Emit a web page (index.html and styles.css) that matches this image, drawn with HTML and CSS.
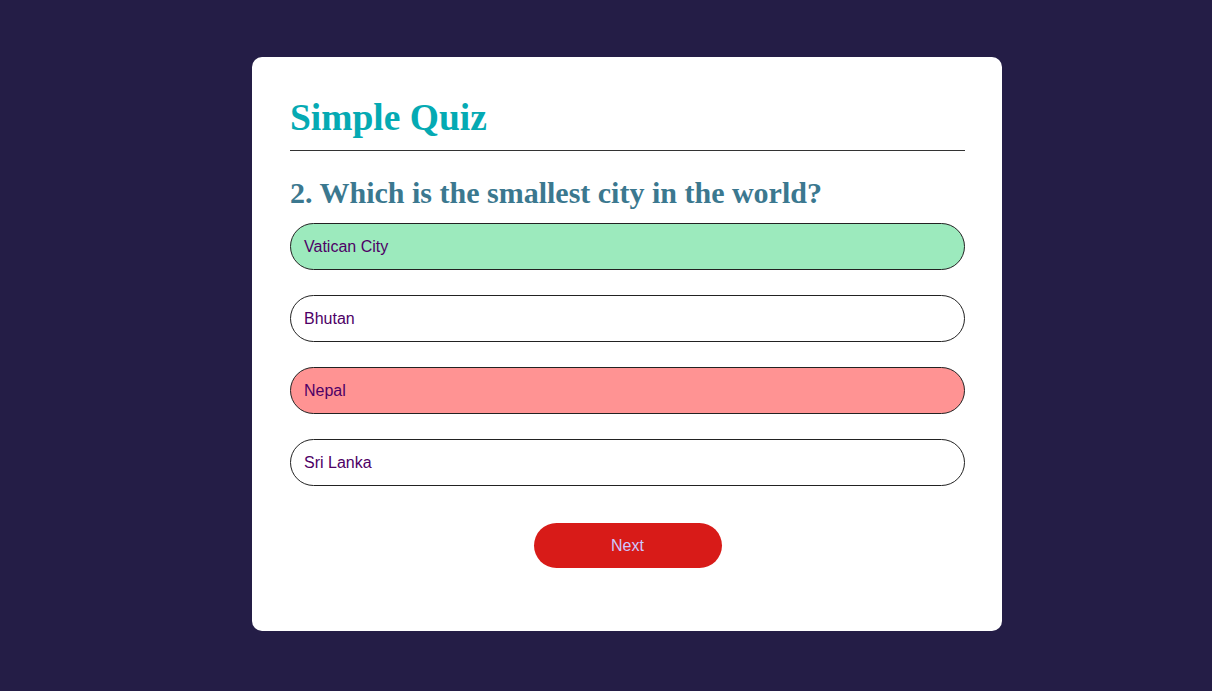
FILE: index.html
```html
<!DOCTYPE html>
<html lang="en">
<head>
<meta charset="utf-8">
<title>Simple Quiz</title>
<link rel="stylesheet" href="styles.css">
</head>
<body>
<div class="app">
  <h1 class="title">Simple Quiz</h1>
  <div class="quiz">
    <h2 class="question">2. Which is the smallest city in the world?</h2>
    <div class="answers">
      <button class="btn correct">Vatican City</button>
      <button class="btn">Bhutan</button>
      <button class="btn incorrect">Nepal</button>
      <button class="btn">Sri Lanka</button>
    </div>
    <button class="next">Next</button>
  </div>
</div>
</body>
</html>
```
FILE: styles.css
```css
* { box-sizing: border-box; }
html, body { margin: 0; padding: 0; }
body {
  background: #241d46;
  height: 691px;
  overflow: hidden;
  font-family: "Liberation Serif", "Times New Roman", serif;
}
.app {
  width: 750px;
  margin: 57px 0 0 252px;
  background: #ffffff;
  border-radius: 10px;
  padding: 39px 37px 63px 38px;
}
.title {
  margin: 0;
  font-size: 37.5px;
  font-weight: bold;
  color: #05aab3;
  padding-bottom: 11px;
  border-bottom: 1px solid #333333;
}
.question {
  margin: 25px 0 13px;
  font-size: 30px;
  font-weight: bold;
  color: #3b788f;
}
.answers {
  display: flex;
  flex-direction: column;
  gap: 25px;
}
.btn {
  display: block;
  width: 100%;
  height: 47px;
  padding: 0 13px;
  text-align: left;
  font-family: "Liberation Sans", Arial, sans-serif;
  font-size: 16px;
  color: #4e0066;
  background: #ffffff;
  border: 1px solid #222222;
  border-radius: 24px;
}
.btn.correct { background: #9ceabd; }
.btn.incorrect { background: #ff9393; }
.next {
  display: block;
  width: 188px;
  height: 45px;
  margin: 37px auto 0;
  background: #d81b18;
  color: #cdc8ff;
  border: none;
  border-radius: 23px;
  font-family: "Liberation Sans", Arial, sans-serif;
  font-size: 16px;
}
```
